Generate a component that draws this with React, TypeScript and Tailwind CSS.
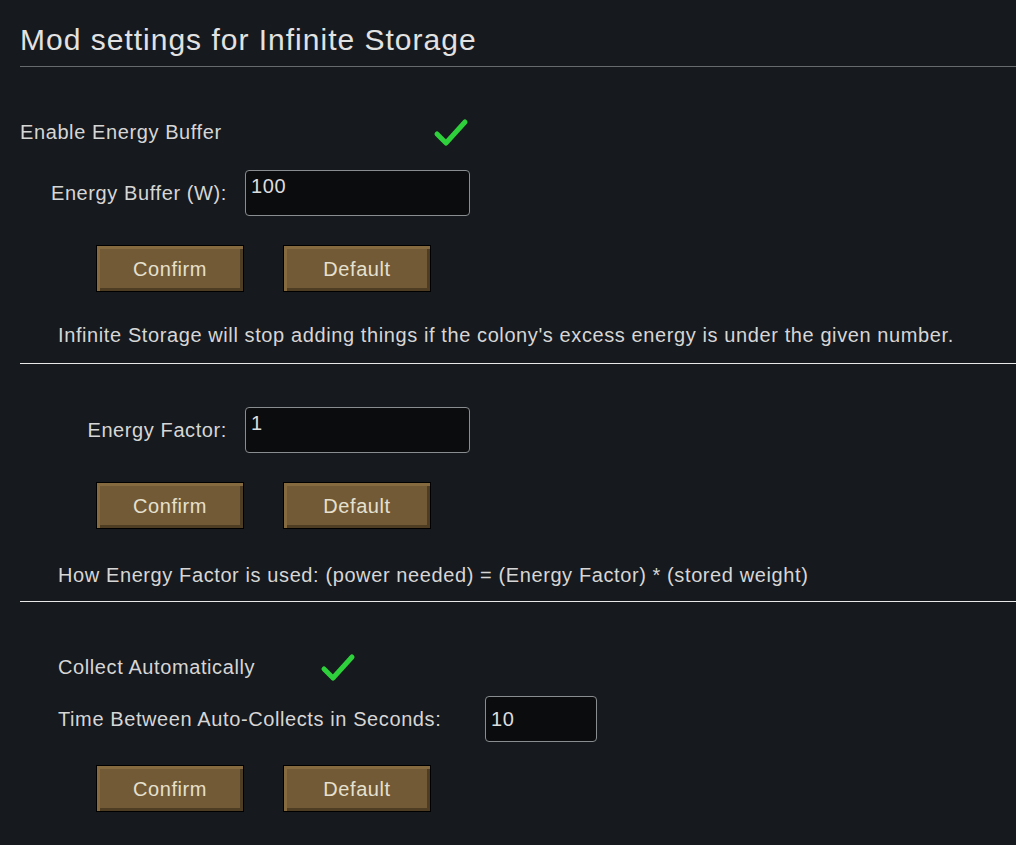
import React from 'react';

const CheckMark = () => (
  <svg width="36" height="30" viewBox="0 0 36 30" className="block">
    <path d="M4 17 L13 26 L32 5" fill="none" stroke="#2ed03b" strokeWidth="5" strokeLinecap="round" strokeLinejoin="round" />
  </svg>
);

const Field = ({ value, className = '' }: { value: string; className?: string }) => (
  <div className={`h-[46px] rounded-[4px] border border-[#8a8d90] bg-[#0b0c0e] px-[5px] pt-[3px] text-[20px] leading-[24px] text-[#dcdcdc] ${className}`}>
    {value}
  </div>
);

const BrownButton = ({ label }: { label: string }) => (
  <button className="h-[47px] w-[148px] border border-black bg-[#735a36] text-[20px] tracking-[0.6px] text-[#e6e0cf] shadow-[inset_3px_3px_0_#85693f,inset_-3px_-3px_0_#4f3d23]">
    {label}
  </button>
);

const ButtonRow = ({ className = '' }: { className?: string }) => (
  <div className={`flex gap-[39px] pl-[76px] ${className}`}>
    <BrownButton label="Confirm" />
    <BrownButton label="Default" />
  </div>
);

export default function App() {
  return (
    <div className="min-h-screen bg-[#16191d] pl-5 text-[20px] tracking-[0.6px] text-[#d6d6d6] font-['Liberation_Sans',Arial,sans-serif]">
      <div className="border-b border-[#676a6d] pt-[23px] pb-[10px]">
        <h1 className="text-[30px] leading-[33px] tracking-[1px] text-[#e2e2e2]">Mod settings for Infinite Storage</h1>
      </div>

      {/* energy buffer */}
      <div className="mt-[50px] flex h-[30px] items-center">
        <span className="w-[413px]">Enable Energy Buffer</span>
        <CheckMark />
      </div>
      <div className="mt-[23px] flex items-center">
        <span className="w-[207px] text-right">Energy Buffer (W):</span>
        <Field value="100" className="ml-[18px] w-[225px]" />
      </div>
      <ButtonRow className="mt-[29px]" />
      <p className="mt-[31px] pl-[38px] leading-[24px]">
        Infinite Storage will stop adding things if the colony's excess energy is under the given number.
      </p>
      <div className="mt-[16px] h-px bg-[#e8e8e8]" />

      {/* energy factor */}
      <div className="mt-[43px] flex items-center">
        <span className="w-[207px] text-right">Energy Factor:</span>
        <Field value="1" className="ml-[18px] w-[225px]" />
      </div>
      <ButtonRow className="mt-[29px]" />
      <p className="mt-[34px] pl-[38px] leading-[24px]">
        How Energy Factor is used: (power needed) = (Energy Factor) * (stored weight)
      </p>
      <div className="mt-[14px] h-px bg-[#e8e8e8]" />

      {/* auto collect */}
      <div className="mt-[50px] flex h-[30px] items-center pl-[38px]">
        <span className="w-[262px]">Collect Automatically</span>
        <CheckMark />
      </div>
      <div className="mt-[14px] flex items-center pl-[38px]">
        <span className="w-[427px]">Time Between Auto-Collects in Seconds:</span>
        <Field value="10" className="w-[112px] pt-[10px]" />
      </div>
      <ButtonRow className="mt-[23px] pb-[34px]" />
    </div>
  );
}
